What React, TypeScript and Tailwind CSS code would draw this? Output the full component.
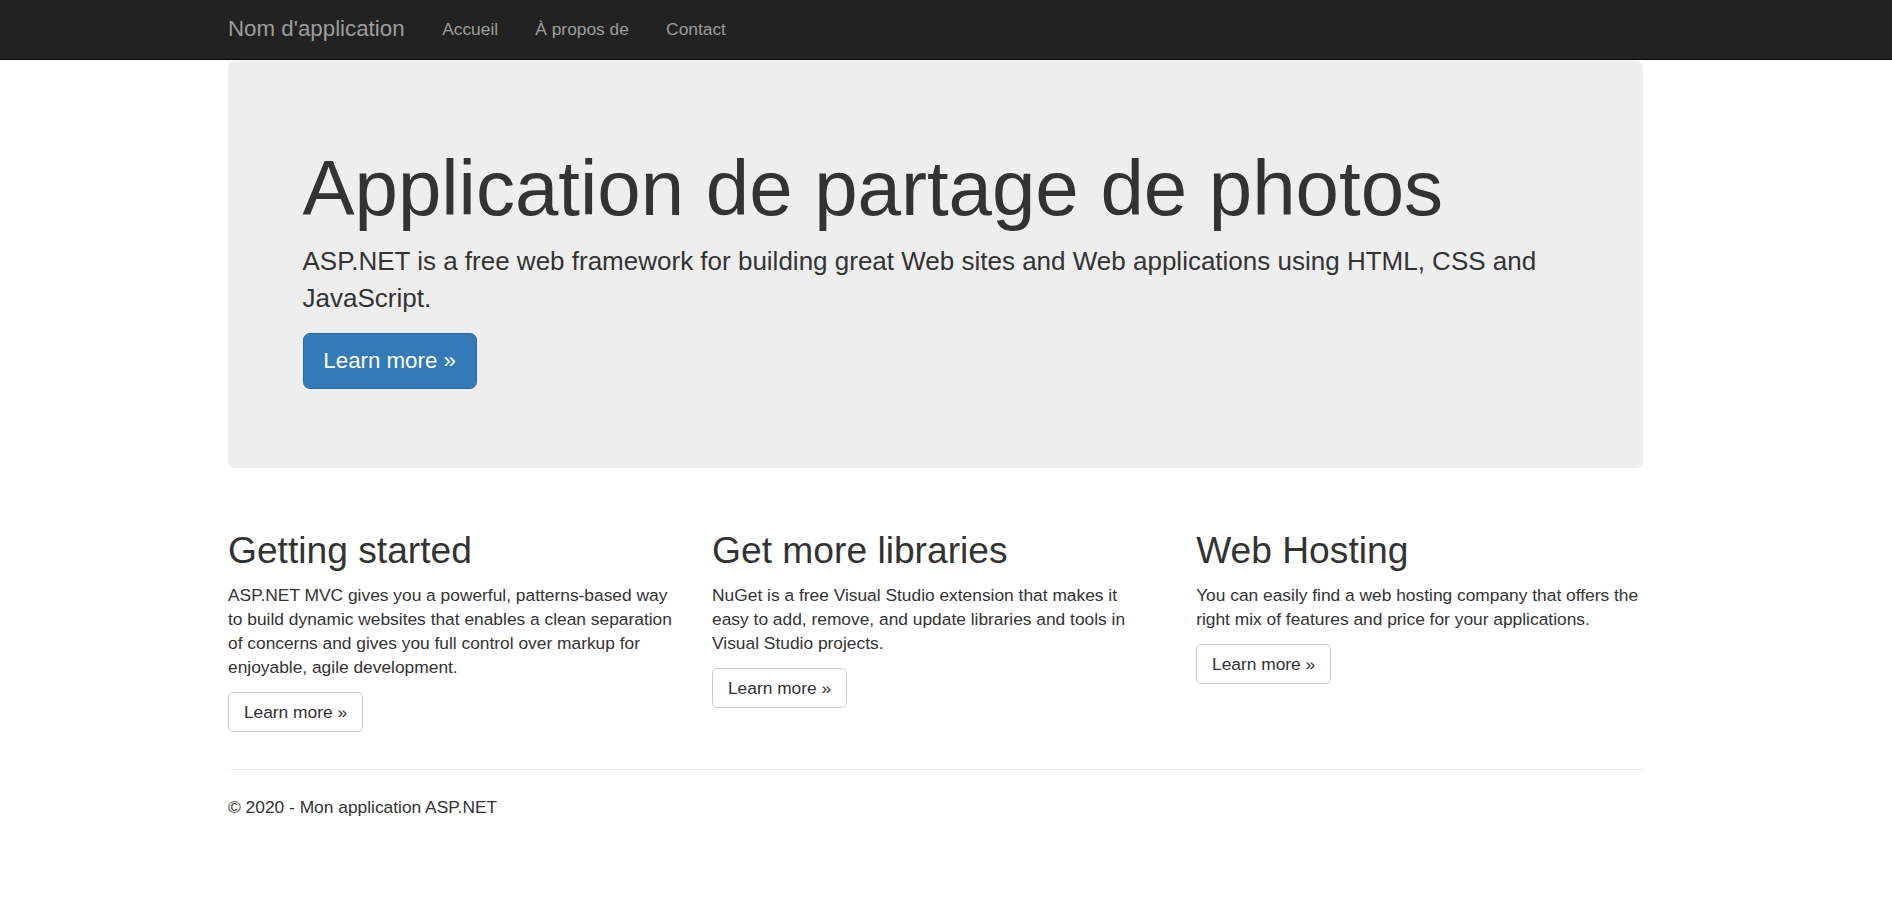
export default function App() {
  const font = "font-['Liberation_Sans',Arial,Helvetica,sans-serif]";
  const cols = [
    {
      title: "Getting started",
      text: "ASP.NET MVC gives you a powerful, patterns-based way to build dynamic websites that enables a clean separation of concerns and gives you full control over markup for enjoyable, agile development.",
    },
    {
      title: "Get more libraries",
      text: "NuGet is a free Visual Studio extension that makes it easy to add, remove, and update libraries and tools in Visual Studio projects.",
    },
    {
      title: "Web Hosting",
      text: "You can easily find a web hosting company that offers the right mix of features and price for your applications.",
    },
  ];
  return (
    <div className={`${font} min-h-[902px] bg-white text-[#333]`}>
      <nav className="bg-[#222] border-b border-[#080808]">
        <div className="w-[1415px] ml-[228px] h-[59px] flex items-start">
          <a className="pt-[16px] leading-[25px] text-[22.3px] text-[#9d9d9d] pr-[19px]">Nom d'application</a>
          <ul className="flex items-start">
            <li className="pt-[17px] leading-[25px] text-[17.36px] text-[#9d9d9d] px-[18.6px]">Accueil</li>
            <li className="pt-[17px] leading-[25px] text-[17.36px] text-[#9d9d9d] px-[18.6px]">À propos de</li>
            <li className="pt-[17px] leading-[25px] text-[17.36px] text-[#9d9d9d] px-[18.6px]">Contact</li>
          </ul>
        </div>
      </nav>
      <main className="w-[1415px] ml-[228px] pt-px">
        <section className="bg-[#eee] rounded-[7px] pl-[74.5px] pr-[74.5px] pt-[84px] pb-[79px]">
          <h1 className="text-[78px] leading-[86px] font-normal mb-[12px]">Application de partage de photos</h1>
          <p className="text-[26px] leading-[37px] mb-[16px]">
            ASP.NET is a free web framework for building great Web sites and Web applications using HTML, CSS and JavaScript.
          </p>
          <div>
            <a className="inline-flex items-center h-[56px] px-[19.84px] text-[22.3px] text-white bg-[#337ab7] border border-[#2e6da4] rounded-[7px]">
              Learn more »
            </a>
          </div>
        </section>
        <div className="grid grid-cols-3 gap-x-[37.2px] mt-[37px]">
          {cols.map((c) => (
            <div key={c.title}>
              <h2 className="mt-[25px] text-[37.2px] leading-[41px] font-normal mb-[12.4px]">{c.title}</h2>
              <p className="w-[445px] text-[17.36px] leading-[24px] mb-[12.4px]">{c.text}</p>
              <a className="inline-flex items-center h-[40px] px-[14.88px] text-[17.36px] text-[#333] bg-white border border-[#ccc] rounded-[5px]">
                Learn more »
              </a>
            </div>
          ))}
        </div>
        <div className="mt-[37px]">
          <hr className="border-0 border-t border-[#eee] mt-0" />
          <footer className="pt-[25px]">
            <p className="text-[17.36px] leading-[24px] mb-[12.4px]">© 2020 - Mon application ASP.NET</p>
          </footer>
        </div>
      </main>
    </div>
  );
}
